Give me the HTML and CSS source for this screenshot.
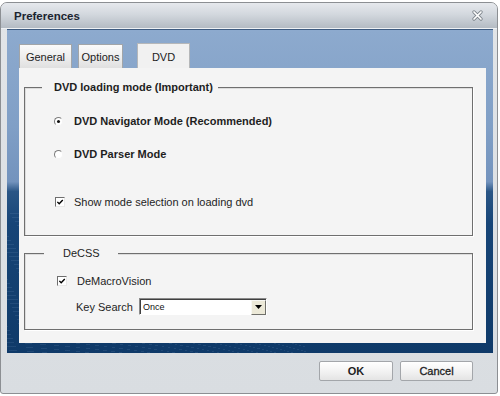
FILE: index.html
```html
<!DOCTYPE html>
<html>
<head>
<meta charset="utf-8">
<link rel="stylesheet" href="styles.css">
</head>
<body>
<div class="window">
  <div class="titlebar">
    <span class="title">Preferences</span>
    <svg class="close" width="11" height="11" viewBox="0 0 11 11">
      <path d="M2 2 L9 9 M9 2 L2 9" stroke="#7d848b" stroke-width="3.2" stroke-linecap="round"/>
      <path d="M2 2 L9 9 M9 2 L2 9" stroke="#ffffff" stroke-width="1.7" stroke-linecap="round"/>
    </svg>
  </div>
  <div class="client">
    <div class="tabs">
      <div class="tab t-general">General</div>
      <div class="tab t-options">Options</div>
      <div class="tab active">DVD</div>
    </div>
    <div class="panel">
      <div class="group g1">
        <div class="legend l1">DVD loading mode (Important)</div>
        <div class="row r1"><span class="radio checked"></span><span class="lbl bold">DVD Navigator Mode (Recommended)</span></div>
        <div class="row r2"><span class="radio"></span><span class="lbl bold">DVD Parser Mode</span></div>
        <div class="row r3"><span class="check"><svg width="9" height="9" viewBox="0 0 9 9"><path d="M1.5 3.8 L3.6 6 L7.6 1.8" fill="none" stroke="#000" stroke-width="1.6"/></svg></span><span class="lbl">Show mode selection on loading dvd</span></div>
      </div>
      <div class="group g2">
        <div class="legend l2">DeCSS</div>
        <div class="row ra"><span class="check"><svg width="9" height="9" viewBox="0 0 9 9"><path d="M1.5 3.8 L3.6 6 L7.6 1.8" fill="none" stroke="#000" stroke-width="1.6"/></svg></span><span class="lbl">DeMacroVision</span></div>
        <div class="row rb">
          <span class="lbl">Key Search</span>
          <div class="select">
            <span class="sel-text">Once</span>
            <span class="sel-btn"><svg width="7" height="4" viewBox="0 0 7 4"><path d="M0 0 H7 L3.5 4 Z" fill="#000"/></svg></span>
          </div>
        </div>
      </div>
    </div>
  </div>
  <div class="footer">
    <button class="btn ok">OK</button>
    <button class="btn cancel">Cancel</button>
  </div>
</div>
</body>
</html>
```
FILE: styles.css
```css
html, body {
  margin: 0;
  padding: 0;
  background: #ffffff;
}
body {
  width: 500px;
  height: 396px;
  overflow: hidden;
  font-family: "Liberation Sans", Arial, sans-serif;
  font-size: 11px;
  color: #1e1e1e;
}
.window {
  box-sizing: border-box;
  margin-top: 2px;
  width: 498px;
  height: 392px;
  border: 1px solid #8c8f93;
  border-radius: 7px 7px 3px 3px;
  overflow: hidden;
  display: flex;
  flex-direction: column;
  background: linear-gradient(180deg, #e2e5e8 0%, #d9dde1 100%);
}
.titlebar {
  height: 25px;
  border-bottom: 1px solid #eef1f4;
  background: linear-gradient(180deg, #e6e9ed 0%, #d3d8de 45%, #b4bbc3 100%);
  display: flex;
  align-items: center;
  justify-content: space-between;
  padding: 0 14px 0 13px;
  flex: none;
}
.title {
  font-weight: bold;
  font-size: 11.5px;
  color: #1b2430;
}
.close {
  display: block;
}
.client {
  flex: none;
  height: 324px;
  box-sizing: border-box;
  margin: 0 4px 0 6px;
  border-top: 1px solid #3e5b80;
  padding: 13px 7px 10px 12px;
  display: flex;
  flex-direction: column;
  background:
    repeating-radial-gradient(ellipse 300px 130px at -60px 380px, rgba(255,255,255,0) 0 5px, rgba(150,180,215,0.12) 5px 6px, rgba(255,255,255,0) 6px 9px) left bottom / 300px 140px no-repeat,
    linear-gradient(180deg, #8daace 0%, #809fc6 30%, #7393bd 47%, #2a5686 50%, #174577 60%, #0f3a69 100%);
}
.tabs {
  height: 25px;
  display: flex;
  align-items: flex-end;
  flex: none;
}
.tab {
  box-sizing: border-box;
  height: 24px;
  border: 1px solid #a2a5a8;
  border-bottom: none;
  background: linear-gradient(180deg, #fafafa 0%, #eeeeee 50%, #e0e0e0 100%);
  display: flex;
  align-items: center;
  justify-content: center;
  font-size: 11px;
  color: #222;
  padding-top: 1px;
}
.t-general { width: 53px; margin-right: 6px; }
.t-options { width: 45px; margin-right: 14px; }
.tab.active {
  width: 53px;
  height: 25px;
  background: #f1f1f1;
  border-color: #b5b7b9;
}
.panel {
  flex: none;
  height: 275px;
  box-sizing: border-box;
  background: #f4f4f4;
  padding: 19px 13px 0 5px;
  display: flex;
  flex-direction: column;
}
.group {
  box-sizing: border-box;
  border: 1px solid #6f6f6f;
  box-shadow: inset 1px 1px 0 #dcdcdc, 1px 1px 0 #ffffff;
  display: flex;
  flex-direction: column;
}
.g1 { height: 149px; }
.g2 { height: 77px; margin-top: 17px; }
.legend {
  align-self: flex-start;
  height: 14px;
  line-height: 14px;
  margin-top: -8px;
  background: #f4f4f4;
}
.l1 {
  margin-left: 17px;
  padding: 0 5px 0 12px;
  font-weight: bold;
}
.l2 {
  margin-left: 19px;
  padding: 0 18px 0 19px;
}
.row {
  height: 16px;
  display: flex;
  align-items: center;
}
.bold { font-weight: bold; }
.r1 { margin-top: 19px; padding-left: 29px; }
.r2 { margin-top: 17px; padding-left: 29px; }
.r3 { margin-top: 32px; padding-left: 30px; }
.ra { margin-top: 13px; padding-left: 32px; }
.rb { margin-top: 9px; padding-left: 51px; height: 17px; }
.r1 .radio, .r2 .radio { margin-right: 11px; }
.r3 .check { margin-right: 9px; }
.ra .check { margin-right: 10px; }
.radio {
  box-sizing: border-box;
  width: 9px;
  height: 9px;
  border-radius: 50%;
  border: 1px solid;
  border-color: #7c7c7c #f4f4f4 #f4f4f4 #7c7c7c;
  background: #ffffff;
  position: relative;
  flex: none;
}
.radio.checked::after {
  content: "";
  position: absolute;
  left: 2px;
  top: 2px;
  width: 3px;
  height: 3px;
  border-radius: 50%;
  background: #111;
}
.check {
  box-sizing: border-box;
  width: 10px;
  height: 10px;
  border: 1px solid;
  border-color: #6e6e6e #e8e8e8 #e8e8e8 #6e6e6e;
  background: #ffffff;
  display: flex;
  align-items: center;
  justify-content: center;
  flex: none;
}
.check svg { display: block; }
.select {
  box-sizing: border-box;
  margin-left: 6px;
  width: 128px;
  height: 17px;
  border: 1px solid;
  border-color: #8a8a8a #ffffff #ffffff #8a8a8a;
  box-shadow: inset 1px 1px 0 #404040;
  background: #ffffff;
  display: flex;
  align-items: center;
  justify-content: space-between;
}
.sel-text {
  font-size: 9px;
  padding-left: 3px;
  color: #111;
}
.sel-btn {
  box-sizing: border-box;
  width: 15px;
  height: 15px;
  margin-top: 1px;
  background: #ece9d8;
  border: 1px solid;
  border-color: #f8f8f4 #6f6f6a #6f6f6a #f8f8f4;
  display: flex;
  align-items: center;
  justify-content: center;
}
.sel-btn svg { display: block; }
.footer {
  flex: none;
  height: 40px;
  box-sizing: border-box;
  padding: 8px 24px 0 0;
  display: flex;
  justify-content: flex-end;
  align-items: flex-start;
  gap: 7px;
}
.btn {
  box-sizing: border-box;
  height: 20px;
  border: 1px solid #a3a6aa;
  border-radius: 2px;
  background: linear-gradient(180deg, #ffffff 0%, #f3f3f3 50%, #e4e4e4 100%);
  font-family: "Liberation Sans", Arial, sans-serif;
  font-size: 11px;
  font-weight: bold;
  color: #1e1e1e;
  padding: 0;
}
.ok { width: 74px; }
.cancel { width: 73px; font-weight: normal; -webkit-text-stroke: 0.3px #1e1e1e; }
```
